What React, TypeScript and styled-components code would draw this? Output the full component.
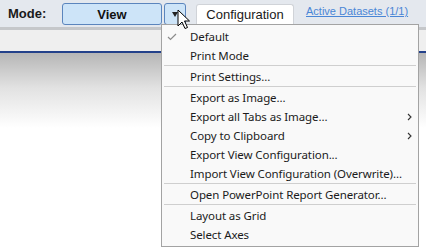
import React from 'react';
import styled, { createGlobalStyle } from 'styled-components';

const GlobalStyle = createGlobalStyle`
  html, body {
    margin: 0;
    padding: 0;
    background: #ffffff;
  }
  body {
    font-family: 'Noto Sans', 'Open Sans', sans-serif;
  }
`;

const Page = styled.div`
  position: relative;
  width: 426px;
  height: 252px;
  overflow: hidden;
  display: flex;
  flex-direction: column;
`;

const Toolbar = styled.div`
  height: 30px;
  flex-shrink: 0;
  display: flex;
  align-items: flex-start;
  padding: 3px 0 0 8px;
  box-sizing: border-box;
  background: #e4e8ee;
  border-bottom: 3px solid #c5c7ca;
`;

const ModeLabel = styled.span`
  width: 54px;
  line-height: 22px;
  font-family: 'Liberation Sans', Arial, sans-serif;
  font-weight: bold;
  font-size: 13px;
  color: #1a1a1a;
`;

const SplitButton = styled.div`
  display: flex;
  gap: 2px;
`;

const ModeButton = styled.button<{ $wide?: boolean }>`
  width: ${(p) => (p.$wide ? '100px' : '22px')};
  height: 22px;
  padding: 0;
  display: flex;
  align-items: center;
  justify-content: center;
  background: #cde4f8;
  border: 1px solid #5b85bd;
  border-radius: 3px;
  font-family: 'Liberation Sans', Arial, sans-serif;
  font-weight: bold;
  font-size: 13px;
  color: #111;
`;

const Caret = styled.span`
  width: 0;
  height: 0;
  border-left: 3px solid transparent;
  border-right: 3px solid transparent;
  border-top: 5px solid #222;
`;

const Tab = styled.div`
  margin-left: 10px;
  margin-top: 1px;
  height: 26px;
  width: 98px;
  box-sizing: border-box;
  display: flex;
  justify-content: center;
  padding-top: 2px;
  background: #ffffff;
  border: 1px solid #d0d3d8;
  border-bottom: none;
  border-radius: 3px 3px 0 0;
  font-family: 'Liberation Sans', Arial, sans-serif;
  font-size: 13px;
  color: #1a1a1a;
`;

const DatasetLink = styled.a`
  margin-left: 12px;
  margin-top: 2px;
  font-family: 'Liberation Sans', Arial, sans-serif;
  font-size: 11px;
  color: #4a86d6;
  text-decoration: underline;
`;

const SubBar = styled.div`
  height: 21px;
  flex-shrink: 0;
  background: #efefef;
  border-bottom: 2px solid #23418a;
`;

const Canvas = styled.div`
  flex: 1;
  background: linear-gradient(#b6b6b6 0px, #e2e2e2 35px, #ffffff 75px);
`;

const Menu = styled.ul`
  position: absolute;
  left: 161px;
  top: 24px;
  width: 258px;
  box-sizing: border-box;
  margin: 0;
  padding: 2px 0;
  list-style: none;
  background: #f9f9f9;
  border: 1px solid #a3a3a3;
`;

const Item = styled.li`
  position: relative;
  height: 19px;
  display: flex;
  align-items: center;
  padding-left: 28px;
  font-size: 11.5px;
  letter-spacing: -0.1px;
  color: #1b1b1b;
  white-space: nowrap;
`;

const Separator = styled.li`
  height: 2px;
  margin: 0 2px;
  border-top: 1px solid #cfcfcf;
  box-sizing: border-box;
`;

const Check = styled.svg`
  position: absolute;
  left: 5px;
  top: 6px;
`;

const Chevron = styled.svg`
  position: absolute;
  right: 6px;
  top: 6px;
`;

const Cursor = styled.svg`
  position: absolute;
  left: 177px;
  top: 9px;
`;

type Entry = { label: string; checked?: boolean; sub?: boolean } | 'sep';

const entries: Entry[] = [
  { label: 'Default', checked: true },
  { label: 'Print Mode' },
  'sep',
  { label: 'Print Settings...' },
  'sep',
  { label: 'Export as Image...' },
  { label: 'Export all Tabs as Image...', sub: true },
  { label: 'Copy to Clipboard', sub: true },
  { label: 'Export View Configuration...' },
  { label: 'Import View Configuration (Overwrite)...' },
  'sep',
  { label: 'Open PowerPoint Report Generator...' },
  'sep',
  { label: 'Layout as Grid' },
  { label: 'Select Axes' },
];

export default function App() {
  return (
    <Page>
      <GlobalStyle />
      <Toolbar>
        <ModeLabel>Mode:</ModeLabel>
        <SplitButton>
          <ModeButton $wide>View</ModeButton>
          <ModeButton>
            <Caret />
          </ModeButton>
        </SplitButton>
        <Tab>Configuration</Tab>
        <DatasetLink>Active Datasets (1/1)</DatasetLink>
      </Toolbar>
      <SubBar />
      <Canvas />

      <Menu>
        {entries.map((e, i) =>
          e === 'sep' ? (
            <Separator key={i} />
          ) : (
            <Item key={i}>
              {e.checked && (
                <Check width="10" height="8" viewBox="0 0 10 8">
                  <polyline points="1,4 3.5,6.5 9,1" fill="none" stroke="#8c8c8c" strokeWidth="1.2" />
                </Check>
              )}
              {e.label}
              {e.sub && (
                <Chevron width="5" height="8" viewBox="0 0 5 8">
                  <polyline points="1,1 4,4 1,7" fill="none" stroke="#333" strokeWidth="1.1" />
                </Chevron>
              )}
            </Item>
          )
        )}
      </Menu>

      <Cursor width="14" height="21" viewBox="0 0 14 21">
        <path
          d="M1 1 L1 17 L5 13 L8 19.5 L10.5 18.5 L7.5 12 L12.5 12 Z"
          fill="#ffffff"
          stroke="#000000"
          strokeWidth="1"
          strokeLinejoin="miter"
        />
      </Cursor>
    </Page>
  );
}
